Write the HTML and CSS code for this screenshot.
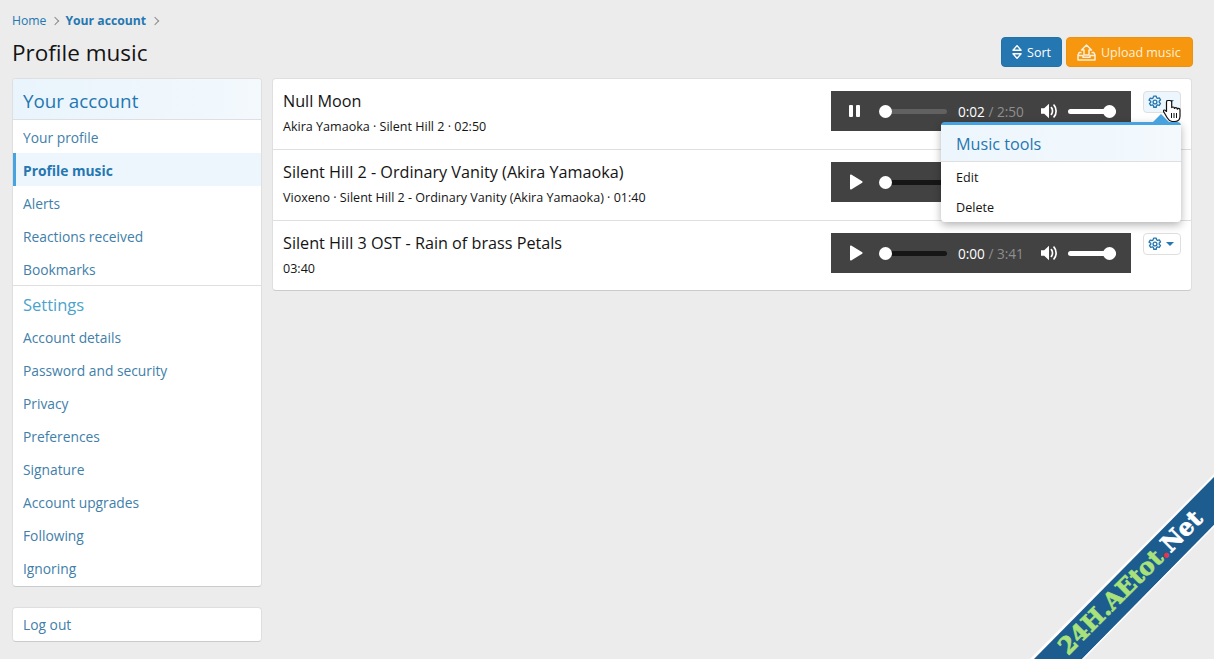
FILE: index.html
```html
<!DOCTYPE html>
<html lang="en">
<head>
    <meta charset="UTF-8">
    <title>Profile music</title>
    <link rel="stylesheet" href="styles.css">
</head>
<body>
    <svg class="icon-defs" width="0" height="0">
        <symbol id="gear" viewBox="0 0 16 16">
            <path d="M6.600 1.200h2.800l.4 2 1.200.7 1.900-.7 1.400 2.400-1.500 1.300v1.400l1.500 1.300-1.400 2.400-1.900-.7-1.200.7-.4 2H6.600l-.4-2-1.200-.7-1.900.7-1.400-2.400 1.500-1.300V7.200L1.200 5.900l1.400-2.400 1.900.7 1.200-.7z" fill="none" stroke="currentColor" stroke-width="1.500" stroke-linejoin="round"/>
            <circle cx="8" cy="8" r="2.200" fill="none" stroke="currentColor" stroke-width="1.500"/>
        </symbol>
        <symbol id="volume" viewBox="0 0 17 16">
            <path d="M0 5.200h3.200L8 .8v14.400l-4.800-4.400H0z" fill="currentColor"/>
            <path d="M10.400 4.600c1.500 1.800 1.500 5 0 6.800M13 2.200c2.800 3 2.800 8.600 0 11.600" fill="none" stroke="currentColor" stroke-width="1.700" stroke-linecap="round"/>
        </symbol>
        <symbol id="play" viewBox="0 0 14 16">
            <path d="M1 1.200v13.600c0 .7.6 1 1.200.7l11-6.800c.5-.3.5-1 0-1.400l-11-6.800C1.600.2 1 .5 1 1.200z" fill="currentColor"/>
        </symbol>
    </svg>

    <div class="page">
        <div class="breadcrumb">
            <a>Home</a>
            <span class="crumb-sep"></span>
            <a class="crumb-current">Your account</a>
            <span class="crumb-sep"></span>
        </div>

        <div class="page-head">
            <h1>Profile music</h1>
            <div class="page-actions">
                <button class="btn btn-sort">
                    <svg width="12" height="20" viewBox="0 0 12 20"><path d="M1.200 8L6 2.400 10.800 8zM1.200 12L6 17.600 10.800 12z" fill="none" stroke="currentColor" stroke-width="1.700" stroke-linejoin="round"/></svg>
                    Sort
                </button>
                <button class="btn btn-upload">
                    <svg width="19" height="17" viewBox="0 0 19 17"><path d="M9.500 1L14.500 6H12v5H7V6H4.500z" fill="none" stroke="currentColor" stroke-width="1.500" stroke-linejoin="round"/><path d="M4.500 8.500H2.200L1 11v5h17v-5l-1.200-2.500h-2.300M1 11.500h5v1.700h7v-1.700h5" fill="none" stroke="currentColor" stroke-width="1.500" stroke-linejoin="round"/></svg>
                    Upload music
                </button>
            </div>
        </div>

        <div class="columns">
            <aside class="sidebar">
                <nav class="block side-nav">
                    <h2 class="block-head">Your account</h2>
                    <a class="nav-link">Your profile</a>
                    <a class="nav-link selected">Profile music</a>
                    <a class="nav-link">Alerts</a>
                    <a class="nav-link">Reactions received</a>
                    <a class="nav-link">Bookmarks</a>
                    <h3 class="nav-group">Settings</h3>
                    <a class="nav-link">Account details</a>
                    <a class="nav-link">Password and security</a>
                    <a class="nav-link">Privacy</a>
                    <a class="nav-link">Preferences</a>
                    <a class="nav-link">Signature</a>
                    <a class="nav-link">Account upgrades</a>
                    <a class="nav-link">Following</a>
                    <a class="nav-link">Ignoring</a>
                </nav>
                <div class="block logout">
                    <a class="nav-link">Log out</a>
                </div>
            </aside>

            <main class="block tracks">
                <div class="track">
                    <div class="track-info">
                        <div class="track-title">Null Moon</div>
                        <div class="track-meta">Akira Yamaoka · Silent Hill 2 · 02:50</div>
                    </div>
                    <div class="player">
                        <span class="player-btn pause"><i></i><i></i></span>
                        <span class="seek seek-played"><b></b></span>
                        <span class="time">0:02 <em>/ 2:50</em></span>
                        <svg class="vol-icon" width="17" height="16"><use href="#volume"/></svg>
                        <span class="vol"><b></b></span>
                    </div>
                    <button class="tool-btn is-open">
                        <svg width="14" height="14"><use href="#gear"/></svg>
                        <span class="caret"></span>
                    </button>

                    <div class="menu">
                        <div class="menu-title">Music tools</div>
                        <a class="menu-link">Edit</a>
                        <a class="menu-link">Delete</a>
                    </div>
                    <svg class="cursor" width="18" height="24" viewBox="0 0 18 24">
                        <path d="M5 1.500c-.9 0-1.500.7-1.500 1.600v9.400l-1-1c-.8-.8-2-.7-2 .5 0 .5.2.9.5 1.300l3.200 5.400c1 1.700 2.300 3.300 4.800 3.800h3c3 0 5-2.200 5-5.200v-6.300c0-1-.7-1.600-1.400-1.600-.6 0-1.100.3-1.300.8 0-1-.8-1.600-1.500-1.600-.7 0-1.200.4-1.400.9 0-1-.7-1.500-1.400-1.500-.5 0-1 .2-1.300.6V3.100c0-.9-.7-1.600-1.700-1.600z" fill="#fff" stroke="#111" stroke-width="1.200" stroke-linejoin="round"/>
                        <path d="M8.500 14v5M11 14v5M13.500 14v5" stroke="#111" stroke-width="1"/>
                    </svg>
                </div>

                <div class="track">
                    <div class="track-info">
                        <div class="track-title">Silent Hill 2 - Ordinary Vanity (Akira Yamaoka)</div>
                        <div class="track-meta">Vioxeno · Silent Hill 2 - Ordinary Vanity (Akira Yamaoka) · 01:40</div>
                    </div>
                    <div class="player">
                        <svg class="player-btn" width="14" height="16"><use href="#play"/></svg>
                        <span class="seek"><b></b></span>
                        <span class="time"></span>
                        <svg class="vol-icon" width="17" height="16"><use href="#volume"/></svg>
                        <span class="vol"><b></b></span>
                    </div>
                    <button class="tool-btn">
                        <svg width="14" height="14"><use href="#gear"/></svg>
                        <span class="caret"></span>
                    </button>
                </div>

                <div class="track">
                    <div class="track-info">
                        <div class="track-title">Silent Hill 3 OST - Rain of brass Petals</div>
                        <div class="track-meta">03:40</div>
                    </div>
                    <div class="player">
                        <svg class="player-btn" width="14" height="16"><use href="#play"/></svg>
                        <span class="seek"><b></b></span>
                        <span class="time">0:00 <em>/ 3:41</em></span>
                        <svg class="vol-icon" width="17" height="16"><use href="#volume"/></svg>
                        <span class="vol"><b></b></span>
                    </div>
                    <button class="tool-btn">
                        <svg width="14" height="14"><use href="#gear"/></svg>
                        <span class="caret"></span>
                    </button>
                </div>
            </main>
        </div>
    </div>

    <svg class="watermark" width="190" height="190" viewBox="0 0 190 190">
        <path d="M6 190L190 5V8L10 190z" fill="#fff"/>
        <path d="M10 190L190 8V56L58 190z" fill="#1d5c8f"/>
        <path d="M58 190L190 56V58L60 190z" fill="#fff"/>
        <text class="wm-text" transform="translate(44 187) rotate(-45)"><tspan class="wm-green">24H.AEtot</tspan><tspan class="wm-red">.</tspan><tspan class="wm-white">Net</tspan></text>
    </svg>
</body>
</html>
```

FILE: styles.css
```css
* {
    box-sizing: border-box;
}

body {
    margin: 0;
    height: 659px;
    overflow: hidden;
    background: #ececec;
    color: #141414;
    font-family: "Open Sans", "Noto Sans", Arial, sans-serif;
    font-size: 13px;
}

a {
    color: #2577b1;
}

.icon-defs {
    display: block;
    height: 0;
}

.page {
    padding: 12px 22px 0 12px;
}

/* breadcrumb + title */
.breadcrumb {
    display: flex;
    align-items: center;
    height: 17px;
    font-size: 12.200px;
}

.crumb-current {
    font-weight: 700;
}

.crumb-sep {
    width: 6px;
    height: 6px;
    margin: 0 7px 0 6px;
    border-top: 1px solid #8c8c8c;
    border-right: 1px solid #8c8c8c;
    transform: rotate(45deg);
}

.crumb-current + .crumb-sep {
    margin-left: 6px;
}

.page-head {
    display: flex;
    justify-content: space-between;
    align-items: center;
    height: 49px;
}

h1 {
    margin: -2px 0 0;
    font-size: 22.500px;
    font-weight: 400;
}

.page-actions {
    display: flex;
    gap: 4px;
    margin: -3px -1px 0 0;
}

.btn {
    display: flex;
    align-items: center;
    gap: 5px;
    height: 30px;
    padding: 0 10px;
    border: 1px solid transparent;
    border-radius: 4px;
    color: #fff;
    font: inherit;
    font-size: 12.500px;
}

.btn-sort {
    width: 61px;
    background: #2577b1;
    border-color: #2272aa;
}

.btn-upload {
    width: 127px;
    background: #f6970f;
    border-color: #ee920e;
    color: #fdf0d8;
}

/* columns */
.columns {
    display: flex;
    align-items: flex-start;
    gap: 10px;
}

.block {
    background: #fff;
    border: 1px solid #dfdfdf;
    border-bottom-color: #cbcbcb;
    border-radius: 4px;
}

.sidebar {
    display: flex;
    flex-direction: column;
    gap: 20px;
    width: 250px;
    flex: none;
}

.side-nav {
    overflow: hidden;
    padding-bottom: 2px;
}

.block-head {
    display: flex;
    align-items: center;
    height: 41px;
    margin: 0;
    padding: 3px 10px 0;
    background: linear-gradient(to right, #e9f4fc, #f3f9fd);
    border-bottom: 1px solid #dfdfdf;
    color: #2577b1;
    font-size: 18.800px;
    font-weight: 400;
}

.nav-link {
    display: flex;
    align-items: center;
    height: 33px;
    padding: 2px 10px 0;
    color: #3f80aa;
    font-size: 13.800px;
}

.nav-link.selected {
    padding-left: 7px;
    background: #edf6fd;
    border-left: 3px solid #47a3e0;
    color: #2577b1;
    font-weight: 700;
}

.nav-group {
    display: flex;
    align-items: center;
    height: 35px;
    margin: 0;
    padding: 3px 10px 0;
    border-top: 1px solid #dfdfdf;
    color: #4ba3cc;
    font-size: 16.500px;
    font-weight: 400;
}

.logout .nav-link {
    padding-top: 0;
}

/* track list */
.tracks {
    flex: 1;
}

.track {
    position: relative;
    display: flex;
    align-items: flex-start;
    height: 71px;
    padding: 12px 10px 0;
    border-top: 1px solid #dfdfdf;
}

.track:first-child {
    height: 70px;
    border-top: 0;
}

.track:last-child {
    height: 70px;
}

.track-info {
    flex: 1;
    min-width: 0;
}

.track-title {
    font-size: 16.200px;
    line-height: 21px;
}

.track-meta {
    margin-top: 7px;
    font-size: 12.550px;
    line-height: 16px;
}

/* fake audio player, same size as the chrome one */
.player {
    display: flex;
    align-items: center;
    width: 300px;
    height: 40px;
    padding-left: 18px;
    background: #424242;
    color: #fff;
}

.player-btn {
    flex: none;
    margin-right: 22px;
}

.pause {
    display: flex;
    gap: 3px;
    width: 11px;
    margin-right: 25px;
}

.pause i {
    width: 4px;
    height: 12px;
    border-radius: 1px;
    background: #fff;
}

.seek {
    position: relative;
    width: 62px;
    height: 5px;
    border-radius: 3px;
    background: #161616;
}

.seek-played {
    background: #616161;
}

.seek b,
.vol b {
    position: absolute;
    top: -4px;
    width: 13px;
    height: 13px;
    border-radius: 50%;
    background: #fff;
}

.seek b {
    left: -6px;
}

.time {
    width: 83px;
    margin-left: 11px;
    font-size: 13.600px;
    white-space: nowrap;
}

.time em {
    color: #8f8f8f;
    font-style: normal;
}

.vol-icon {
    flex: none;
}

.vol {
    position: relative;
    width: 48px;
    height: 5px;
    margin-left: 10px;
    border-radius: 3px;
    background: #fff;
}

.vol b {
    right: 0;
}

.tool-btn {
    display: flex;
    align-items: center;
    gap: 4px;
    width: 38px;
    height: 22px;
    margin-left: 12px;
    padding: 0 0 0 4px;
    background: #fff;
    border: 1px solid #dfdfdf;
    border-radius: 4px;
    color: #2577b1;
}

.tool-btn.is-open {
    background: #edf6fd;
}

.caret {
    width: 0;
    height: 0;
    border-left: 4px solid transparent;
    border-right: 4px solid transparent;
    border-top: 4px solid #2577b1;
}

/* open popup */
.menu {
    position: absolute;
    top: 43px;
    right: 10px;
    z-index: 5;
    width: 240px;
    height: 100px;
    background: #fff;
    border-top: 3px solid #47a3e0;
    border-radius: 4px;
    box-shadow: 0 3px 8px rgba(0, 0, 0, 0.3);
}

.menu::before {
    content: "";
    position: absolute;
    top: -11px;
    right: 12px;
    border-left: 8px solid transparent;
    border-right: 8px solid transparent;
    border-bottom: 8px solid #47a3e0;
}

.menu-title {
    display: flex;
    align-items: center;
    height: 37px;
    padding: 2px 15px 0;
    background: linear-gradient(to right, #edf6fd, #f3f9fd);
    border-bottom: 1px solid #dfdfdf;
    color: #2577b1;
    font-size: 16.200px;
}

.menu-link {
    display: flex;
    align-items: center;
    height: 30px;
    padding: 0 15px;
    color: #141414;
    font-size: 12.600px;
}

.cursor {
    position: absolute;
    top: 20px;
    right: 10px;
    z-index: 6;
}

/* corner stamp */
.watermark {
    position: absolute;
    right: 0;
    bottom: 0;
    z-index: 10;
}

.wm-text {
    font-family: "DejaVu Serif", serif;
    font-size: 23.500px;
    font-weight: 700;
    stroke-width: 0.7px;
}

.wm-green {
    fill: #a9e27a;
    stroke: #a9e27a;
}

.wm-red {
    fill: #e8334a;
    stroke: #e8334a;
}

.wm-white {
    fill: #fff;
    stroke: #fff;
}
```
